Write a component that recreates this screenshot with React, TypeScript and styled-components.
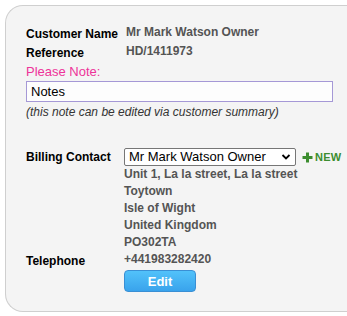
import React from "react";
import styled, { createGlobalStyle } from "styled-components";

const Global = createGlobalStyle`
  html, body { margin: 0; padding: 0; background: #ffffff; }
  body { font-family: "Liberation Sans", Arial, sans-serif; }
`;

const Page = styled.div`
  display: flex;
  height: 316px;
  padding-top: 5px;
  padding-left: 5px;
  box-sizing: border-box;
`;

const Panel = styled.div`
  flex: 1;
  height: 307px;
  box-sizing: border-box;
  background: #f4f4f4;
  border: 1px solid #cfcfcf;
  border-right: none;
  border-radius: 18px 0 0 18px;
  padding: 19px 10px 0 20px;
`;

const ScrollTrack = styled.div`
  width: 3px;
  height: 316px;
  margin-top: -5px;
  display: flex;
  flex-direction: column;
  background: #f0f0f0;
`;

const ScrollThumb = styled.div`
  height: 288px;
  margin-left: 1px;
  width: 2px;
  background: #c8c8c8;
`;

const InfoGrid = styled.div`
  display: grid;
  grid-template-columns: 100px auto;
  row-gap: 0;
`;

const Label = styled.div`
  font-size: 12px;
  font-weight: bold;
  color: #000;
  line-height: 19px;
`;

const Value = styled.div`
  font-size: 12px;
  font-weight: bold;
  color: #545454;
  line-height: 19px;
  margin-top: -2px;
`;

const NoteTitle = styled.div`
  font-size: 13px;
  color: #ee3399;
  line-height: 18px;
`;

const NoteBox = styled.div`
  width: 307px;
  height: 21px;
  box-sizing: border-box;
  border: 1px solid #a598d6;
  background: #fdfdfd;
  font-size: 13px;
  color: #000;
  padding: 0 4px;
  line-height: 19px;
`;

const Hint = styled.div`
  font-size: 12px;
  font-style: italic;
  color: #333;
  line-height: 18px;
  margin-top: 1px;
`;

const ContactGrid = styled.div`
  display: grid;
  grid-template-columns: 98px auto;
  margin-top: 27px;
`;

const ContactLabel = styled.div<{ $offset?: number }>`
  font-size: 12px;
  font-weight: bold;
  color: #000;
  line-height: 18px;
  align-self: start;
  margin-top: ${(p) => p.$offset ?? 0}px;
`;

const ContactCol = styled.div`
  display: flex;
  flex-direction: column;
`;

const SelectRow = styled.div`
  display: flex;
  align-items: center;
  gap: 6px;
`;

const SelectBox = styled.div`
  position: relative;
  width: 172px;
  height: 18px;
  box-sizing: border-box;
  border: 1px solid #767676;
  border-radius: 2px;
  background: #fff;
  font-size: 13px;
  color: #000;
  line-height: 16px;
  padding-left: 4px;
`;

const Chevron = styled.svg`
  position: absolute;
  right: 4px;
  top: 4px;
`;

const NewLink = styled.span`
  display: inline-flex;
  align-items: center;
  gap: 2px;
  font-size: 11px;
  font-weight: bold;
  color: #3c8d2f;
  letter-spacing: 0.2px;
`;

const AddressLine = styled.div`
  font-size: 12px;
  font-weight: bold;
  color: #545454;
  line-height: 17px;
`;

const EditButton = styled.button`
  width: 72px;
  height: 22px;
  margin-top: 2px;
  box-sizing: border-box;
  border: 1px solid #3a8fd4;
  border-radius: 4px;
  background: linear-gradient(#52c2fa, #39a3ec);
  color: #fff;
  font-family: "Liberation Sans", Arial, sans-serif;
  font-size: 13px;
  font-weight: bold;
  padding: 0;
  cursor: pointer;
`;

export default function App() {
  return (
    <>
      <Global />
      <Page>
        <Panel>
          <InfoGrid>
            <Label>Customer Name</Label>
            <Value>Mr Mark Watson Owner</Value>
            <Label>Reference</Label>
            <Value>HD/1411973</Value>
          </InfoGrid>
          <NoteTitle>Please Note:</NoteTitle>
          <NoteBox>Notes</NoteBox>
          <Hint>(this note can be edited via customer summary)</Hint>
          <ContactGrid>
            <ContactLabel $offset={0}>Billing Contact</ContactLabel>
            <ContactCol>
              <SelectRow>
                <SelectBox>
                  Mr Mark Watson Owner
                  <Chevron width="10" height="8" viewBox="0 0 10 8">
                    <path d="M1.5 2 L5 5.5 L8.5 2" fill="none" stroke="#000" strokeWidth="1.8" />
                  </Chevron>
                </SelectBox>
                <NewLink>
                  <svg width="11" height="11" viewBox="0 0 11 11">
                    <path d="M5.5 0.5 V10.5 M0.5 5.5 H10.5" stroke="#3c8d2f" strokeWidth="3" />
                  </svg>
                  NEW
                </NewLink>
              </SelectRow>
            </ContactCol>
            <ContactLabel $offset={86}>Telephone</ContactLabel>
            <ContactCol>
              <AddressLine>Unit 1, La la street, La la street</AddressLine>
              <AddressLine>Toytown</AddressLine>
              <AddressLine>Isle of Wight</AddressLine>
              <AddressLine>United Kingdom</AddressLine>
              <AddressLine>PO302TA</AddressLine>
              <AddressLine>+441983282420</AddressLine>
              <div>
                <EditButton>Edit</EditButton>
              </div>
            </ContactCol>
          </ContactGrid>
        </Panel>
        <ScrollTrack>
          <ScrollThumb />
        </ScrollTrack>
      </Page>
    </>
  );
}
